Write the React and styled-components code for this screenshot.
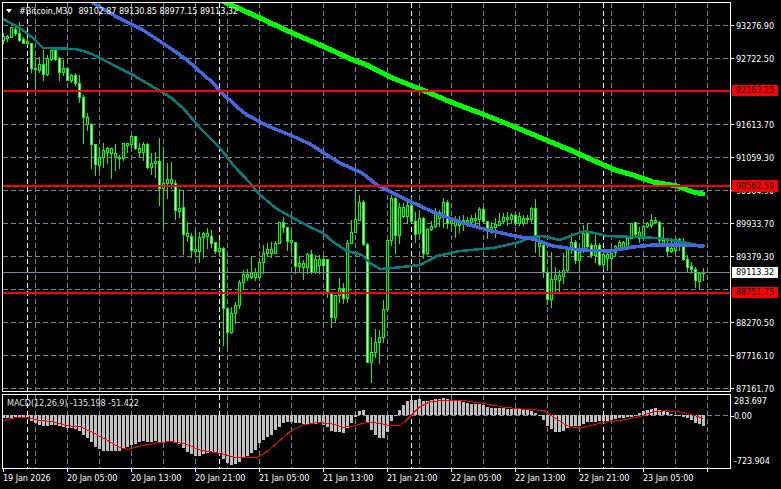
import React from "react";
import styled, { createGlobalStyle } from "styled-components";

const GlobalStyle = createGlobalStyle`
  html, body { margin: 0; padding: 0; background: #000; }
  body { width: 781px; height: 489px; overflow: hidden; }
`;

/* [bodyTop, bodyBottom, wickTop, wickBottom, filled] */
const CANDLES = [
  [36,40,33,43,0],[36,38,35,41,0],[27,37,27,37,0],[29,33,27,35,1],[33,40,22,41,1],[39,43,37,43,1],[41,43,38,44,0],[43,68,43,72,1],
  [68,69,57,90,1],[64,70,57,72,0],[64,74,50,80,1],[58,74,55,75,0],[50,59,48,60,0],[50,59,50,60,1],[58,72,57,80,1],[68,72,60,75,0],
  [68,80,68,80,1],[75,80,74,82,0],[75,83,73,85,1],[83,97,75,102,1],[97,117,95,143,1],[117,124,113,130,0],[124,144,123,168,1],[144,164,144,175,1],
  [157,165,147,170,0],[150,157,143,167,0],[148,152,147,163,0],[148,153,148,178,0],[153,157,144,170,0],[157,158,155,168,0],[143,158,143,160,0],[143,145,143,152,0],
  [136,144,135,147,0],[136,148,136,149,1],[148,152,143,157,0],[144,152,142,160,0],[144,167,143,168,1],[163,167,153,174,0],[161,163,152,177,0],[161,188,138,205,1],
  [183,188,147,228,0],[179,183,163,198,0],[179,183,162,188,0],[183,210,180,219,1],[208,211,189,217,0],[207,234,190,254,1],[233,236,222,241,0],[236,250,233,257,1],
  [249,251,230,256,0],[237,251,232,262,0],[233,237,232,257,0],[233,236,228,248,0],[236,243,230,247,1],[242,251,242,253,1],[248,251,240,255,0],[248,308,247,345,1],
  [308,332,308,347,1],[313,332,307,333,0],[305,313,302,323,0],[282,305,280,308,0],[274,282,270,289,0],[274,277,269,280,0],[273,277,257,278,0],[272,277,268,280,0],
  [262,277,258,280,0],[253,262,245,273,0],[249,253,243,256,0],[249,253,242,257,0],[243,253,241,253,0],[222,243,222,243,0],[222,227,217,232,1],[227,241,227,250,1],
  [240,242,230,252,0],[242,266,242,273,1],[263,266,257,272,0],[263,267,260,279,0],[254,267,253,273,0],[254,272,250,273,1],[259,272,255,273,0],[259,265,255,273,0],
  [259,265,256,274,1],[259,291,259,297,1],[292,317,292,327,1],[295,317,295,322,0],[288,295,278,302,0],[288,298,283,303,1],[243,298,240,302,0],[232,243,220,243,0],
  [219,232,187,232,0],[202,220,195,220,0],[202,244,200,245,1],[244,362,243,362,1],[352,362,337,382,0],[342,352,329,357,0],[337,342,330,363,0],[309,337,300,342,0],
  [240,309,240,310,0],[198,240,195,245,0],[198,235,197,253,1],[207,235,203,243,0],[207,216,203,217,0],[205,216,200,223,0],[205,221,197,222,1],[221,234,212,242,1],
  [218,233,210,234,0],[218,253,217,258,1],[229,253,228,254,0],[226,229,221,230,0],[212,226,208,227,0],[212,218,210,226,0],[202,217,198,227,0],[202,223,200,228,1],
  [220,223,217,230,0],[220,225,216,237,0],[221,225,216,232,0],[220,222,215,230,0],[220,222,217,226,0],[218,222,215,224,0],[218,220,213,225,0],[209,219,207,228,0],
  [209,221,207,222,1],[221,231,221,238,1],[227,231,222,233,0],[224,227,218,237,0],[221,225,213,225,0],[217,221,213,223,0],[217,219,212,225,0],[215,219,213,222,0],
  [215,223,213,225,1],[216,223,212,225,0],[218,223,215,225,0],[218,219,215,222,0],[208,219,207,222,0],[208,235,199,252,1],[243,246,237,255,0],[245,272,245,277,1],
  [272,299,272,304,1],[279,299,252,307,0],[275,279,267,293,0],[275,280,270,292,0],[270,276,253,283,0],[248,270,247,272,0],[242,247,233,253,0],[242,260,240,263,1],
  [252,260,250,272,0],[233,250,225,252,0],[233,246,223,247,1],[245,255,243,257,1],[245,255,235,262,0],[245,264,243,265,1],[254,264,250,269,0],[254,258,250,270,0],
  [253,258,248,269,0],[246,252,245,255,0],[242,248,240,250,0],[242,248,241,249,0],[238,248,237,248,0],[223,238,223,238,0],[222,234,222,235,1],[232,238,227,242,0],
  [226,238,225,240,0],[223,226,222,227,0],[220,225,214,227,0],[220,222,217,223,0],[222,240,221,242,1],[240,243,227,245,0],[243,251,238,255,1],[248,251,238,252,0],
  [239,250,238,252,0],[239,246,238,250,1],[246,259,238,260,1],[259,267,255,272,1],[266,269,262,273,1],[269,280,267,287,1],[273,281,272,288,0],[272,273,268,280,0],
];

/* bar ends, in 1/3 px below y=385; 91 is the zero line */
const BARS = [
  100,98,98,97,97,97,100,108,115,120,123,122,120,120,122,125,130,130,133,138,150,158,172,185,192,197,197,197,197,197,190,185,
  180,177,172,168,170,170,168,172,170,170,170,175,178,190,200,208,212,212,208,205,202,200,205,222,235,240,238,230,220,212,205,195,
  175,165,155,150,135,125,115,112,110,115,115,118,118,118,118,115,120,125,138,140,140,143,130,115,95,78,75,110,135,150,158,158,
  140,108,90,75,60,47,45,44,42,47,47,44,42,41,40,42,44,46,48,50,55,56,57,58,60,65,68,70,70,70,72,72,
  73,73,74,76,78,85,91,105,122,132,140,140,138,130,125,122,122,118,112,112,110,108,108,108,105,103,100,98,97,95,90,85,
  78,75,72,70,74,78,82,87,90,93,95,98,106,115,118,122,
];

const SIGNAL = [
  [10,107],[50,97],[80,97],[110,105],[160,110],[200,122],[240,125],[280,143],[320,165],[360,188],[385,193],[420,183],[480,172],[520,170],[560,178],[600,195],
  [660,205],[710,218],[770,218],[800,200],[830,175],[870,140],[910,120],[950,113],[990,115],[1030,127],[1060,123],[1100,112],[1140,115],[1170,122],
  [1200,123],[1230,95],[1260,65],[1290,50],[1330,46],[1390,47],[1450,55],[1510,66],[1570,73],[1630,76],[1660,95],[1700,122],[1740,130],[1810,112],[1870,105],
  [1920,95],[1960,80],[2000,77],[2050,82],[2110,100],
].map(([x, z]) => `${(x / 3).toFixed(1)},${(385 + z / 3).toFixed(1)}`).join(" ");

const TEAL = "3,19 20,28 33,38 43,48 75,49 87,52 100,58 117,67 133,75 150,85 170,97 183,108 200,128 220,148 233,165 250,183 260,195 277,209 293,218 310,227 323,233 333,242 347,251 362,255 370,263 380,269 393,268 420,265 437,256 460,251 493,248 520,242 530,237 542,236 560,240 570,236 585,231 607,236 633,237 658,238 677,241 687,243 703,246";
const BLUE = "93,3 117,17 143,30 173,50 187,60 213,83 220,91 237,107 247,115 270,127 290,135 310,144 327,155 340,163 362,173 377,185 407,200 433,212 460,222 487,230 520,237 533,239 553,246 580,250 610,251 633,247 653,245 680,245 703,246";
const LIME = "222,1 227,3 260,18 290,32 320,45 353,60 367,65 390,77 420,89 453,103 480,113 510,125 570,150 615,170 633,175 653,182 677,186 693,192 703,194";

const DAY_LINES = [27, 219, 411, 603];
const GRID_V = Array.from({ length: 22 }, (_, i) => 35 + i * 32);
const GRID_H = Array.from({ length: 12 }, (_, i) => 25 + i * 33);
const PRICES = ["93276.90","92722.50","","91613.70","91059.30","90504.90","89933.70","89379.30","","88270.50","87716.10","87161.70"];
const TIMES = ["19 Jan 2026","20 Jan 05:00","20 Jan 13:00","20 Jan 21:00","21 Jan 05:00","21 Jan 13:00","21 Jan 21:00","22 Jan 05:00","22 Jan 13:00","22 Jan 21:00","23 Jan 05:00",""];
const LEVELS = [90, 185, 292];
const candleX = (i) => 3 + 4 * i;

const Page = styled.div`
  display: grid;
  grid-template-columns: 729px 50px;
  grid-template-rows: 390px 75px 20px;
  row-gap: 2px;
  padding: 2px 0 0 2px;
  width: 779px;
  font-family: "DejaVu Sans", Verdana, sans-serif;
  font-stretch: condensed;
  font-size: 9px;
  letter-spacing: -0.08px;
  color: #fff;
  background: #000;
`;
const Pane = styled.div`
  position: relative;
  border: 1px solid #fff;
  background: #000;
  overflow: hidden;
`;
const Plot = styled.svg`
  display: block;
  width: 727px;
  height: 100%;
`;
const Title = styled.div`
  position: absolute;
  top: 2px;
  left: 3px;
  display: flex;
  align-items: center;
  height: 12px;
  white-space: pre;
`;
const Caret = styled.span`
  width: 0;
  height: 0;
  margin-right: 7px;
  border-left: 3.5px solid transparent;
  border-right: 3.5px solid transparent;
  border-top: 4px solid #fff;
`;
const Symbol = styled.span`
  margin-right: 6px;
`;
const MacdTitle = styled.div`
  position: absolute;
  top: 1px;
  left: 4px;
  height: 14px;
  line-height: 14px;
  white-space: pre;
  color: #e4e4e4;
`;
const PriceAxis = styled.div`
  position: relative;
  display: flex;
  flex-direction: column;
  padding-top: 7px;
  box-sizing: border-box;
`;
const PriceRow = styled.div`
  display: flex;
  align-items: center;
  flex: 0 0 33px;
`;
const Tick = styled.span`
  flex: 0 0 3px;
  height: 1px;
  margin-right: ${(p) => p.$gap}px;
  background: ${(p) => (p.$blank ? "transparent" : "#fff")};
`;
const PriceTag = styled.div`
  position: absolute;
  top: ${(p) => p.$top}px;
  left: 1px;
  width: 46px;
  height: ${(p) => p.$height}px;
  line-height: ${(p) => p.$height}px;
  text-align: center;
  background: ${(p) => p.$bg};
  color: #000;
`;
const MacdAxis = styled.div`
  display: flex;
  flex-direction: column;
`;
const MacdRow = styled.div`
  display: flex;
  align-items: center;
  height: 14px;
  margin-top: ${(p) => p.$mt}px;
`;
const TimeAxis = styled.div`
  grid-column: 1 / -1;
  display: flex;
  padding-left: 1px;
  margin-top: -2px;
`;
const TimeCell = styled.div`
  flex: 0 0 64px;
  white-space: pre;
  &::before {
    content: "";
    display: block;
    width: 1px;
    height: 3px;
    margin-bottom: 1px;
    background: #fff;
  }
`;

function Grid({ top, bottom, horizontals }) {
  return (
    <g shapeRendering="crispEdges" strokeWidth="1">
      {GRID_V.map((x) => (
        <line key={x} x1={x + 0.5} x2={x + 0.5} y1={top} y2={bottom} stroke="#778899" strokeDasharray="5 3" />
      ))}
      {horizontals.map((y) => (
        <line key={y} x1="3" x2="730" y1={y + 0.5} y2={y + 0.5} stroke="#778899" strokeDasharray="5 3" />
      ))}
      {DAY_LINES.map((x) => (
        <line key={x} x1={x + 0.5} x2={x + 0.5} y1={top} y2={bottom} stroke="#fff" strokeDasharray="5 3" />
      ))}
    </g>
  );
}

function Candles() {
  return (
    <g shapeRendering="crispEdges">
      {CANDLES.map(([t, b, wt, wb, fill], i) => {
        const x = candleX(i);
        return (
          <g key={i}>
            <line x1={x + 0.5} x2={x + 0.5} y1={wt} y2={wb + 1} stroke="#00ff00" />
            <rect x={x - 0.5} y={t + 0.5} width="2" height={Math.max(b - t, 1)} fill={fill ? "#fff" : "#000"} stroke="#00ff00" />
          </g>
        );
      })}
    </g>
  );
}

function MainChart() {
  return (
    <Plot viewBox="3 3 727 388" preserveAspectRatio="none">
      <Grid top={3} bottom={391} horizontals={GRID_H} />
      <Candles />
      <rect x="3" y="272" width="727" height="1" fill="#778899" shapeRendering="crispEdges" />
      <g fill="none" shapeRendering="crispEdges" strokeLinejoin="round" strokeLinecap="round">
        <polyline points={TEAL} stroke="#008080" strokeWidth="2.5" />
        <polyline points={BLUE} stroke="#4169e1" strokeWidth="3.5" />
        <polyline points={LIME} stroke="#00ff00" strokeWidth="5" />
      </g>
      {LEVELS.map((y) => (
        <rect key={y} x="3" y={y} width="727" height="2" fill="#ff0000" shapeRendering="crispEdges" />
      ))}
    </Plot>
  );
}

function MacdChart() {
  return (
    <Plot viewBox="3 395 727 73" preserveAspectRatio="none">
      <Grid top={395} bottom={468} horizontals={[415]} />
      <g shapeRendering="crispEdges" fill="#c0c0c0">
        {BARS.map((z, i) => {
          const end = Math.round(385 + z / 3);
          const y = Math.min(end, 415);
          const h = Math.max(Math.abs(end - 415), 1);
          return <rect key={i} x={candleX(i) - 1} y={y} width="3" height={h} />;
        })}
      </g>
      <polyline points={SIGNAL} fill="none" stroke="#ff0000" strokeWidth="1" shapeRendering="crispEdges" />
    </Plot>
  );
}

export default function App() {
  return (
    <>
      <GlobalStyle />
      <Page>
        <Pane>
          <MainChart />
          <Title>
            <Caret />
            <Symbol>#Bitcoin,M30</Symbol>
            <span>89102.87 89130.85 88977.15 89113.32</span>
          </Title>
        </Pane>
        <PriceAxis>
          {PRICES.map((p, i) => (
            <PriceRow key={i}>
              <Tick $gap={2} $blank={!p} />
              <span>{p}</span>
            </PriceRow>
          ))}
          <PriceTag $top={83} $height={11} $bg="#ff0000">92163.25</PriceTag>
          <PriceTag $top={178} $height={12} $bg="#ff0000">90562.59</PriceTag>
          <PriceTag $top={265} $height={11} $bg="#fff">89113.32</PriceTag>
          <PriceTag $top={285} $height={11} $bg="#ff0000">88751.75</PriceTag>
        </PriceAxis>
        <Pane>
          <MacdChart />
          <MacdTitle>MACD(12,26,9) -135.198 -51.422</MacdTitle>
        </Pane>
        <MacdAxis>
          <MacdRow $mt={0}><Tick $gap={0} $blank /><span>283.697</span></MacdRow>
          <MacdRow $mt={1}><Tick $gap={0} /><span>0.00</span></MacdRow>
          <MacdRow $mt={31}><Tick $gap={0} $blank /><span>-723.904</span></MacdRow>
        </MacdAxis>
        <TimeAxis>
          {TIMES.map((t, i) => (
            <TimeCell key={i}>{t}</TimeCell>
          ))}
        </TimeAxis>
      </Page>
    </>
  );
}
